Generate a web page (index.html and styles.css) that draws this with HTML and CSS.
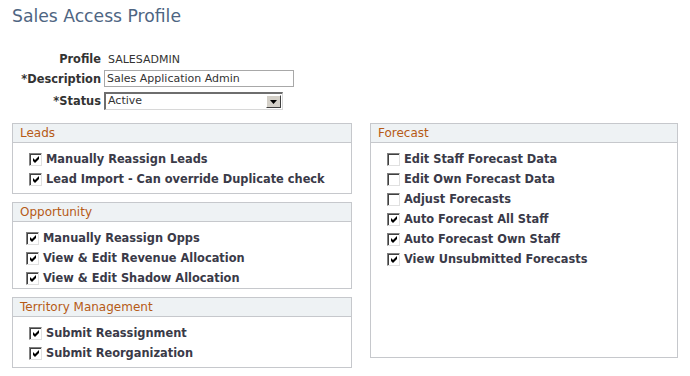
FILE: index.html
```html
<!DOCTYPE html>
<html lang="en">
<head>
    <meta charset="UTF-8">
    <title>Sales Access Profile</title>
    <link rel="stylesheet" href="styles.css">
</head>
<body>
    <h1 class="page-title">Sales Access Profile</h1>

    <div class="form">
        <span class="label short">Profile</span>
        <span class="value short">SALESADMIN</span>

        <span class="label">*Description</span>
        <span class="input">Sales Application Admin</span>

        <span class="label">*Status</span>
        <span class="select">
            <span class="select-text">Active</span>
            <span class="select-btn">
                <svg width="7" height="4" viewBox="0 0 7 4"><path d="M0 0h7L3.5 4z" fill="#000"/></svg>
            </span>
        </span>
    </div>

    <div class="columns">
        <div class="col-left">
            <div class="box">
                <div class="box-head">Leads</div>
                <div class="box-body">
                    <div class="check-row"><span class="cb on"></span>Manually Reassign Leads</div>
                    <div class="check-row"><span class="cb on"></span>Lead Import - Can override Duplicate check</div>
                </div>
            </div>

            <div class="box">
                <div class="box-head">Opportunity</div>
                <div class="box-body tight">
                    <div class="check-row"><span class="cb on"></span>Manually Reassign Opps</div>
                    <div class="check-row"><span class="cb on"></span>View &amp; Edit Revenue Allocation</div>
                    <div class="check-row"><span class="cb on"></span>View &amp; Edit Shadow Allocation</div>
                </div>
            </div>

            <div class="box">
                <div class="box-head">Territory Management</div>
                <div class="box-body">
                    <div class="check-row"><span class="cb on"></span>Submit Reassignment</div>
                    <div class="check-row"><span class="cb on"></span>Submit Reorganization</div>
                </div>
            </div>
        </div>

        <div class="col-right">
            <div class="box box-tall">
                <div class="box-head">Forecast</div>
                <div class="box-body">
                    <div class="check-row"><span class="cb"></span>Edit Staff Forecast Data</div>
                    <div class="check-row"><span class="cb"></span>Edit Own Forecast Data</div>
                    <div class="check-row"><span class="cb"></span>Adjust Forecasts</div>
                    <div class="check-row"><span class="cb on"></span>Auto Forecast All Staff</div>
                    <div class="check-row"><span class="cb on"></span>Auto Forecast Own Staff</div>
                    <div class="check-row"><span class="cb on"></span>View Unsubmitted Forecasts</div>
                </div>
            </div>
        </div>
    </div>
</body>
</html>
```

FILE: styles.css
```css
body {
    margin: 0;
    padding: 0 12px;
    font-family: "DejaVu Sans", Verdana, sans-serif;
    font-size: 11px;
    color: #333333;
    background-color: white;
}
.page-title {
    margin: 0;
    padding-top: 6px;
    height: 48px;
    box-sizing: border-box;
    font-size: 17.2px;
    font-weight: normal;
    color: #4e6582;
}
.form {
    display: grid;
    grid-template-columns: 89px auto;
    column-gap: 3px;
    row-gap: 5px;
    align-items: center;
    width: 290px;
    margin-top: 6px;
}
.label {
    text-align: right;
    font-weight: bold;
    font-size: 11.4px;
}
.short {
    line-height: 11px;
}
.value {
    padding-left: 4px;
}
.input {
    box-sizing: border-box;
    width: 190px;
    height: 17px;
    border: 1px solid #a8a8a8;
    padding: 0 2px;
    line-height: 15px;
    color: #333;
}
.select {
    box-sizing: border-box;
    width: 179px;
    height: 18px;
    border-top: 2px solid #6e6e6e;
    border-left: 2px solid #6e6e6e;
    border-right: 1px solid #d8d8d8;
    border-bottom: 1px solid #d8d8d8;
    display: flex;
    align-items: stretch;
}
.select-text {
    flex: 1;
    padding-left: 2px;
    line-height: 14px;
}
.select-btn {
    width: 15px;
    margin: 1px;
    box-sizing: border-box;
    background-color: #d4d0c8;
    border-top: 1px solid #fff;
    border-left: 1px solid #fff;
    border-right: 1px solid #404040;
    border-bottom: 1px solid #404040;
    display: flex;
    align-items: center;
    justify-content: center;
}
.columns {
    display: flex;
    gap: 18px;
    margin-top: 13px;
}
.col-left {
    width: 341px;
    display: flex;
    flex-direction: column;
    gap: 8px;
}
.col-right {
    width: 309px;
}
.box {
    border: 1px solid #c6c8cc;
}
.box-tall {
    box-sizing: border-box;
    height: 235px;
}
.box-head {
    background-color: #eef2f4;
    border-bottom: 1px solid #c6c8cc;
    color: #b65a16;
    font-size: 12px;
    height: 18px;
    line-height: 18px;
    padding-left: 7px;
}
.box-body {
    padding: 6px 0 4px 16px;
}
.box-body.tight {
    padding: 6px 0 0 13px;
}
.check-row {
    display: flex;
    align-items: center;
    height: 20px;
    font-weight: bold;
    font-size: 11.4px;
    color: #3a3a48;
}
.cb {
    box-sizing: border-box;
    width: 13px;
    height: 13px;
    margin-right: 4px;
    border-top: 1px solid #808080;
    border-left: 1px solid #808080;
    border-right: 1px solid #e0e0e0;
    border-bottom: 1px solid #e0e0e0;
    box-shadow: inset 1px 1px 0 #404040;
    background-color: white;
    background-position: center;
    background-repeat: no-repeat;
}
.cb.on {
    background-image: url("data:image/svg+xml;utf8,<svg xmlns='http://www.w3.org/2000/svg' width='11' height='11' viewBox='0 0 11 11'><path d='M3 4v3l2 2 4-4V2L5 6z' fill='black'/></svg>");
}
```
